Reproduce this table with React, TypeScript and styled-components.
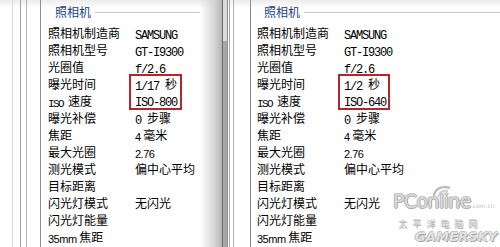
import React from 'react';
import styled, { createGlobalStyle } from 'styled-components';

type Latin = 'mono' | 'narrow' | 'sans';

type Item = {
    label: string;
    value?: string;
    labelLatin?: Latin;
    valueLatin?: Latin;
};

const GlobalStyle = createGlobalStyle`
    html, body {
        margin: 0;
        padding: 0;
        background: #fff;
    }
`;

const Page = styled.div`
    position: relative;
    display: flex;
    width: 500px;
    height: 247px;
    overflow: hidden;
    background: linear-gradient(#ececec, #fff 8px);
    color: #000;
    font-family: 'Noto Sans CJK SC', sans-serif;
    font-size: 12px;
`;

const LeftPanel = styled.div`
    display: flex;
    width: 222px;
    flex: none;
    padding-left: 12px;
    box-sizing: border-box;
`;

const RightPanel = styled.div`
    display: flex;
    flex: 1;
`;

const Rule = styled.div<{ $color: string; $gap: number }>`
    display: flex;
    flex: 1;
    min-width: 0;
    border-left: 1px solid ${(p) => p.$color};
    padding-left: ${(p) => p.$gap}px;
`;

const Track = styled.div`
    width: 4px;
    flex: none;
    background: linear-gradient(#dadada 0, #dadada 41px, #a7a7a7 41px);
`;

const Shade = styled.div`
    width: 22px;
    flex: none;
    background: linear-gradient(to right, rgba(255, 255, 255, 0), #d2d2d2 70%, #b4b4b4);
`;

const List = styled.div`
    display: flex;
    flex-direction: column;
    flex: 1;
    min-width: 0;
`;

const Header = styled.div`
    display: flex;
    align-items: center;
    height: 24px;
    padding-left: 7px;
`;

const Title = styled.span`
    color: #24418a;
    line-height: 14px;
`;

const HeaderLine = styled.div`
    flex: 1;
    height: 1px;
    margin-left: 4px;
    background: #c5c8ce;
`;

const Row = styled.div`
    display: flex;
    height: 17px;
    line-height: 17px;
    white-space: nowrap;
`;

const Label = styled.div`
    width: 87px;
    flex: none;
`;

const Value = styled.div`
    white-space: pre;
`;

const Group = styled.div`
    display: flex;
`;

const Labels = styled.div`
    width: 87px;
    flex: none;
`;

const Box = styled.div<{ $width: number }>`
    box-sizing: border-box;
    width: ${(p) => p.$width}px;
    height: 36px;
    margin: -1px 0 -1px -6px;
    padding-left: 4px;
    border: 2px solid #b3262c;
    line-height: 16px;
    white-space: pre;
`;

const BoxLine = styled.div`
    height: 16px;
`;

const Run = styled.span<{ $latin: Latin }>`
    font-family: ${(p) => (p.$latin === 'sans' ? "'Liberation Sans', sans-serif" : "'Liberation Mono', monospace")};
    font-size: ${(p) => (p.$latin === 'mono' ? 12 : 11)}px;
    letter-spacing: ${(p) => (p.$latin === 'mono' ? -1.2 : p.$latin === 'narrow' ? -1.6 : -0.5)}px;
    line-height: 1;
    vertical-align: -1px;
    white-space: pre;
`;

const Watermark = styled.div`
    position: absolute;
    left: 393px;
    top: 188px;
    width: 107px;
    display: flex;
    flex-direction: column;
    color: #dadada;
    pointer-events: none;
`;

const Swirl = styled.svg`
    position: absolute;
    left: 38px;
    top: -4px;
`;

const Brand = styled.div`
    font-family: 'DejaVu Sans', sans-serif;
    font-size: 19px;
    line-height: 27px;
    letter-spacing: -0.6px;
    white-space: nowrap;
    text-shadow: 1px 0 #a9a9a9, -1px 0 #b9b9b9, 0 1px #a9a9a9, 0 -1px #c2c2c2;
`;

const Tld = styled.span`
    font-size: 6px;
    letter-spacing: 0;
    text-shadow: none;
    color: #c4c4c4;
`;

const Cn = styled.div`
    font-size: 9px;
    line-height: 10px;
    letter-spacing: 5px;
    padding-left: 5px;
    white-space: nowrap;
    color: #cdcdcd;
    text-shadow: 1px 1px #b0b0b0;
`;

const Gamer = styled.div`
    margin-top: 1px;
    padding-left: 22px;
    font-family: 'DejaVu Sans', sans-serif;
    font-weight: bold;
    font-style: italic;
    font-size: 13px;
    line-height: 13px;
    letter-spacing: 0.1px;
    white-space: nowrap;
    color: #e2e2e2;
    text-shadow: 1px 1px #a5a5a5, -1px 0 #bcbcbc, 0 -1px #c4c4c4;
`;

const Mixed = ({ text, latin = 'mono' }: { text: string; latin?: Latin }) => (
    <>
        {text
            .split(/([\x20-\x7e]+)/)
            .filter(Boolean)
            .map((part, i) =>
                /^[\x20-\x7e]+$/.test(part) ? (
                    <Run key={i} $latin={latin}>
                        {part}
                    </Run>
                ) : (
                    <span key={i}>{part}</span>
                )
            )}
    </>
);

const before: Item[] = [
    { label: '照相机制造商', value: 'SAMSUNG' },
    { label: '照相机型号', value: 'GT-I9300' },
    { label: '光圈值', value: 'f/2.6' },
];

const after: Item[] = [
    { label: '曝光补偿', value: '0 步骤' },
    { label: '焦距', value: '4 毫米', valueLatin: 'sans' },
    { label: '最大光圈', value: '2.76', valueLatin: 'sans' },
    { label: '测光模式', value: '偏中心平均' },
    { label: '目标距离' },
    { label: '闪光灯模式', value: '无闪光' },
    { label: '闪光灯能量' },
    { label: '35mm 焦距', labelLatin: 'sans' },
];

const InfoRow = ({ item }: { item: Item }) => (
    <Row>
        <Label>
            <Mixed text={item.label} latin={item.labelLatin} />
        </Label>
        {item.value && (
            <Value>
                <Mixed text={item.value} latin={item.valueLatin} />
            </Value>
        )}
    </Row>
);

const CameraList = ({ exposure, iso, boxWidth }: { exposure: string; iso: string; boxWidth: number }) => (
    <List>
        <Header>
            <Title>照相机</Title>
            <HeaderLine />
        </Header>
        {before.map((item) => (
            <InfoRow key={item.label} item={item} />
        ))}
        <Group>
            <Labels>
                <Row>
                    <Label>曝光时间</Label>
                </Row>
                <Row>
                    <Label>
                        <Mixed text="ISO 速度" latin="narrow" />
                    </Label>
                </Row>
            </Labels>
            <Box $width={boxWidth}>
                <BoxLine>
                    <Mixed text={exposure} />
                </BoxLine>
                <BoxLine>
                    <Mixed text={iso} />
                </BoxLine>
            </Box>
        </Group>
        {after.map((item) => (
            <InfoRow key={item.label} item={item} />
        ))}
    </List>
);

const App = () => (
    <Page>
        <GlobalStyle />
        <LeftPanel>
            <Rule $color="#dcdcdc" $gap={7}>
                <Rule $color="#a2a2a2" $gap={5}>
                    <Rule $color="#b6b6b6" $gap={13}>
                        <Rule $color="#8e8e8e" $gap={7}>
                            <CameraList exposure="1/17 秒" iso="ISO-800" boxWidth={53} />
                            <Shade />
                        </Rule>
                    </Rule>
                </Rule>
            </Rule>
        </LeftPanel>
        <RightPanel>
            <Rule $color="#6b6b6b" $gap={0}>
                <Track />
                <Rule $color="#8f8f8f" $gap={1}>
                    <Rule $color="#a9a9a9" $gap={3}>
                        <Rule $color="#b3b3b3" $gap={16}>
                            <Rule $color="#8a8a8a" $gap={6}>
                                <CameraList exposure="1/2 秒" iso="ISO-640" boxWidth={52} />
                            </Rule>
                        </Rule>
                    </Rule>
                </Rule>
            </Rule>
        </RightPanel>
        <Watermark>
            <Swirl width="22" height="16" viewBox="0 0 22 16">
                <path d="M3 13 C3 5 11 1 19 4" fill="none" stroke="#bdbdbd" strokeWidth="2.5" />
                <path d="M7 13 C8 8 12 6 17 7" fill="none" stroke="#cfcfcf" strokeWidth="2" />
            </Swirl>
            <Brand>
                PConline<Tld>.com.cn</Tld>
            </Brand>
            <Cn>太平洋电脑网</Cn>
            <Gamer>GAMERSKY</Gamer>
        </Watermark>
    </Page>
);

export default App;
